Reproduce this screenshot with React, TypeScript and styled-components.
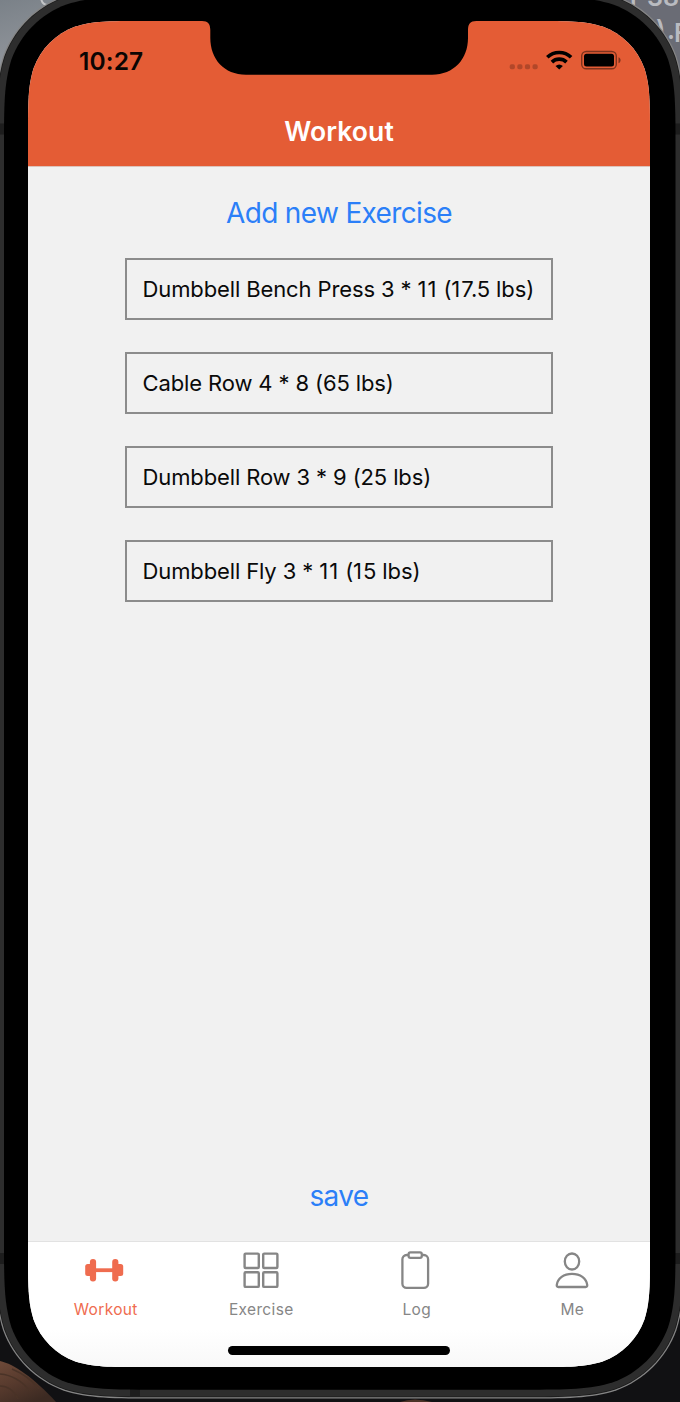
import React from 'react';
import styled, { createGlobalStyle } from 'styled-components';

const GlobalStyle = createGlobalStyle`
  * { box-sizing: border-box; }
  body { margin: 0; background: #000; overflow: hidden; }
`;

/* Rounded rectangle with continuous (superelliptic) corners. */
function squircle(x: number, y: number, w: number, h: number, r: number) {
  const k = [1.528, 1.088, 0.868, 0.631, 0.372, 0.169, 0.0749].map((v) => v * r);
  const [a, b, c, d, e, f, g] = k;
  const X = x + w;
  const Y = y + h;
  return [
    `M${x + a} ${y}L${X - a} ${y}`,
    `C${X - b} ${y} ${X - c} ${y} ${X - d} ${y + g}`,
    `C${X - e} ${y + f} ${X - f} ${y + e} ${X - g} ${y + d}`,
    `C${X} ${y + c} ${X} ${y + b} ${X} ${y + a}`,
    `L${X} ${Y - a}`,
    `C${X} ${Y - b} ${X} ${Y - c} ${X - g} ${Y - d}`,
    `C${X - f} ${Y - e} ${X - e} ${Y - f} ${X - d} ${Y - g}`,
    `C${X - c} ${Y} ${X - b} ${Y} ${X - a} ${Y}`,
    `L${x + a} ${Y}`,
    `C${x + b} ${Y} ${x + c} ${Y} ${x + d} ${Y - g}`,
    `C${x + e} ${Y - f} ${x + f} ${Y - e} ${x + g} ${Y - d}`,
    `C${x} ${Y - c} ${x} ${Y - b} ${x} ${Y - a}`,
    `L${x} ${y + a}`,
    `C${x} ${y + b} ${x} ${y + c} ${x + g} ${y + d}`,
    `C${x + f} ${y + e} ${x + e} ${y + f} ${x + d} ${y + g}`,
    `C${x + c} ${y} ${x + b} ${y} ${x + a} ${y}Z`,
  ].join('');
}

const Desktop = styled.div`
  position: relative;
  width: 680px;
  height: 1402px;
  padding: 21px 30px 35px 28px;
  overflow: hidden;
  font-family: Inter, 'Liberation Sans', sans-serif;
`;

const Artwork = styled.svg`
  position: absolute;
  inset: 0;
  display: block;
`;

const Screen = styled.div`
  position: relative;
  display: flex;
  flex-direction: column;
  width: 622px;
  height: 1346px;
  background: #f1f1f1;
  clip-path: path('${squircle(0, 0, 622, 1346, 75)}');
`;

const Header = styled.header`
  position: relative;
  flex: none;
  height: 146px;
  background: #e45c35;
  border-bottom: 1px solid #dcc3bb;
`;

const Notch = styled.svg`
  position: absolute;
  left: 172px;
  top: 0;
`;

const StatusBar = styled.div`
  display: flex;
  justify-content: space-between;
  height: 78px;
  padding: 25px 29px 0 51px;
`;

const Time = styled.span`
  font-size: 24.5px;
  line-height: 30px;
  font-weight: 600;
  letter-spacing: 0.1px;
  color: #0b0503;
`;

const StatusIcons = styled.svg`
  display: block;
`;

const Title = styled.h1`
  margin: 0;
  padding-top: 16px;
  font-size: 26.5px;
  line-height: 33px;
  font-weight: 600;
  letter-spacing: 0.1px;
  text-align: center;
  color: #fff;
`;

const Content = styled.main`
  flex: 1;
  display: flex;
  flex-direction: column;
  align-items: center;
  padding: 28px 0 27px;
`;

const LinkButton = styled.button`
  border: 0;
  padding: 0;
  background: none;
  font-family: inherit;
  font-size: 28px;
  line-height: 36px;
  letter-spacing: -0.65px;
  color: #2b7ff8;
`;

const List = styled.ul`
  flex: 1;
  display: flex;
  flex-direction: column;
  gap: 32px;
  width: 428px;
  margin: 27px 0 0;
  padding: 0;
  list-style: none;
`;

const Item = styled.li`
  height: 62.1px;
  padding: 0 15.5px;
  border: 2px solid #8c8c8c;
  font-size: 22px;
  line-height: 59px;
  letter-spacing: -0.12px;
  font-feature-settings: 'calt' 0;
  white-space: nowrap;
  color: #0a0a0a;
`;

/* The narrow digit 1 gets a little extra room. */
const One = styled.span`
  letter-spacing: 1px;
`;

const TabBar = styled.nav`
  flex: none;
  display: grid;
  grid-template-columns: repeat(4, 1fr);
  height: 126px;
  border-top: 1px solid #e2e2e2;
  background: linear-gradient(#fff 70%, #f8f8f8);
`;

const Tab = styled.div<{ $active?: boolean }>`
  display: flex;
  flex-direction: column;
  align-items: center;
  padding-top: 8px;
  font-size: 15.5px;
  line-height: 20px;
  letter-spacing: 0.35px;
  color: ${(p) => (p.$active ? '#ef6c4f' : '#868686')};

  svg {
    display: block;
    margin-bottom: 10px;
  }
`;

const HomeIndicator = styled.div`
  position: absolute;
  left: 200px;
  bottom: 12.5px;
  width: 222px;
  height: 8.5px;
  border-radius: 5px;
  background: #000;
`;

const DumbbellIcon = () => (
  <svg width="40" height="40" viewBox="1.8 0 40 40" fill="currentColor" overflow="visible">
    <rect x="1" y="14" width="8" height="12" rx="2.5" />
    <rect x="5.7" y="9" width="6.2" height="22.4" rx="3" />
    <rect x="10" y="18.3" width="20" height="3.8" />
    <rect x="28" y="9" width="6.2" height="22.4" rx="3" />
    <rect x="31" y="14" width="8" height="12" rx="2.5" />
  </svg>
);

const GridIcon = () => (
  <svg width="40" height="40" viewBox="0.2 0.1 40 40" fill="none" stroke="currentColor" strokeWidth="2.4">
    <rect x="3.8" y="3.7" width="14.2" height="14.4" rx="1" />
    <rect x="22.4" y="3.7" width="14.2" height="14.4" rx="1" />
    <rect x="3.8" y="22.4" width="14.2" height="14.6" rx="1" />
    <rect x="22.4" y="22.4" width="14.2" height="14.6" rx="1" />
  </svg>
);

const ClipboardIcon = () => (
  <svg width="40" height="40" viewBox="0.7 0.2 40 40" fill="none" stroke="currentColor" strokeWidth="2.3">
    <path d="M12 5.2H10.3a4.2 4.2 0 0 0-4.2 4.2v24.5a4.2 4.2 0 0 0 4.2 4.2h17.3a4.2 4.2 0 0 0 4.2-4.2V9.4a4.2 4.2 0 0 0-4.2-4.2H26" />
    <rect x="12.3" y="2.6" width="13.2" height="5.5" rx="1.8" />
  </svg>
);

const PersonIcon = () => (
  <svg width="40" height="40" viewBox="0 0.2 40 40" fill="none" stroke="currentColor" strokeWidth="2.3">
    <ellipse cx="20" cy="11.7" rx="7.2" ry="8" />
    <path d="M6.3 37.2h27.4c1.2 0 1.7-.8 1.5-2.2C34.3 28.5 28.3 24 20 24S5.7 28.5 4.8 35c-.2 1.4.3 2.2 1.5 2.2Z" />
  </svg>
);

const exercises = [
  'Dumbbell Bench Press 3 * 11 (17.5 lbs)',
  'Cable Row 4 * 8 (65 lbs)',
  'Dumbbell Row 3 * 9 (25 lbs)',
  'Dumbbell Fly 3 * 11 (15 lbs)',
];

const tabs = [
  { label: 'Workout', Icon: DumbbellIcon, active: true },
  { label: 'Exercise', Icon: GridIcon },
  { label: 'Log', Icon: ClipboardIcon },
  { label: 'Me', Icon: PersonIcon },
];

const PhoneFrame = () => (
  <Artwork width="680" height="1402" viewBox="0 0 680 1402">
    <defs>
      <linearGradient id="sky" x1="0" y1="0" x2="0.3" y2="1">
        <stop offset="0" stopColor="#7a8188" />
        <stop offset="0.6" stopColor="#92969c" />
        <stop offset="1" stopColor="#777b81" />
      </linearGradient>
      <linearGradient id="rock" x1="0" y1="0" x2="0.6" y2="1">
        <stop offset="0" stopColor="#6e4a39" />
        <stop offset="0.5" stopColor="#573a2d" />
        <stop offset="1" stopColor="#3c2a22" />
      </linearGradient>
    </defs>
    <rect width="680" height="1402" fill="#111113" />
    <rect width="110" height="110" fill="url(#sky)" />
    <rect x="560" width="120" height="120" fill="#6a6c75" />
    <path d="M41 -2Q42 5 48 5" fill="none" stroke="#c4c6c8" strokeWidth="2" />
    <g fill="#b9bbc0" fontFamily="Inter, sans-serif" fontSize="25" fontWeight="600">
      <text x="630" y="6">r</text>
      <text x="647" y="6">38</text>
      <text x="656" y="38">)</text>
      <text x="667" y="39">.</text>
      <text x="674" y="42">F</text>
    </g>
    <path d="M0 1361C14 1364 34 1378 56 1402H0Z" fill="url(#rock)" />
    <path d="M0 1374c12 1 22 7 30 17M0 1386c8 0 14 5 18 13M12 1369c12 5 20 11 27 20" fill="none" stroke="#4a3327" strokeWidth="1.5" />
    <path d="M400 1402q14-5 32 0" fill="#4b3226" />
    <path d={squircle(-5, -12, 689.5, 1410.5, 108)} fill="#858585" />
    <path d={squircle(-3.8, -10.8, 687.1, 1408, 107)} fill="#1a1a1a" />
    <path d={squircle(-3, -10, 685.5, 1406.4, 106)} fill="#2d2d2d" />
    <path d="M0 123.5h5v11H0zM675 123.5h5v11h-5zM0 1253h5v11H0zM675 1253h5v11h-5zM130 1388h10v8.5h-10z" fill="#1d1d1d" />
    <path d={squircle(4, -3, 671.5, 1392.7, 99)} fill="#000" />
  </Artwork>
);

export default function App() {
  return (
    <>
      <GlobalStyle />
      <Desktop>
        <PhoneFrame />
        <Screen>
          <Header>
            <Notch width="278" height="54" viewBox="0 0 278 54">
              <path d="M0 0H2C8 0 10.3 3 10.3 9V17C10.3 38 24 53.7 46 53.7H232C254 53.7 268 38 268 17V9C268 3 270.3 0 276.3 0H278Z" fill="#000" />
            </Notch>
            <StatusBar>
              <Time>10:27</Time>
              <StatusIcons width="114" height="30" viewBox="507 46.2 114 30">
                <g fill="#000" fillOpacity="0.22">
                  <rect x="509.7" y="64.5" width="5.2" height="5" rx="1.7" />
                  <rect x="517.3" y="64.5" width="5.2" height="5" rx="1.7" />
                  <rect x="524.9" y="64.5" width="5.2" height="5" rx="1.7" />
                  <rect x="532.5" y="64.5" width="5.2" height="5" rx="1.7" />
                </g>
                <g fill="none" stroke="#000" strokeWidth="3.6">
                  <path d="M547.3 57.5a17 17 0 0 1 23.8 0" />
                  <path d="M551.9 62.3a10.5 10.5 0 0 1 14.6 0" />
                </g>
                <path d="M555.5 66.3a5.8 5.8 0 0 1 7.4 0L559.2 69.6Z" fill="#000" />
                <rect x="581.7" y="51.7" width="34.6" height="17.3" rx="4.6" fill="none" stroke="#000" strokeOpacity="0.45" strokeWidth="1.4" />
                <rect x="584" y="54" width="30" height="12.8" rx="2.5" fill="#000" />
                <path d="M618.5 57.5c2.8 1.2 2.8 4.7 0 5.9Z" fill="#000" fillOpacity="0.45" />
              </StatusIcons>
            </StatusBar>
            <Title>Workout</Title>
          </Header>
          <Content>
            <LinkButton>Add new Exercise</LinkButton>
            <List>
              {exercises.map((label) => (
                <Item key={label}>
                  {label.split(/(1)/).map((part, i) => (part === '1' ? <One key={i}>1</One> : part))}
                </Item>
              ))}
            </List>
            <LinkButton>save</LinkButton>
          </Content>
          <TabBar>
            {tabs.map(({ label, Icon, active }) => (
              <Tab key={label} $active={active}>
                <Icon />
                {label}
              </Tab>
            ))}
          </TabBar>
          <HomeIndicator />
        </Screen>
      </Desktop>
    </>
  );
}
